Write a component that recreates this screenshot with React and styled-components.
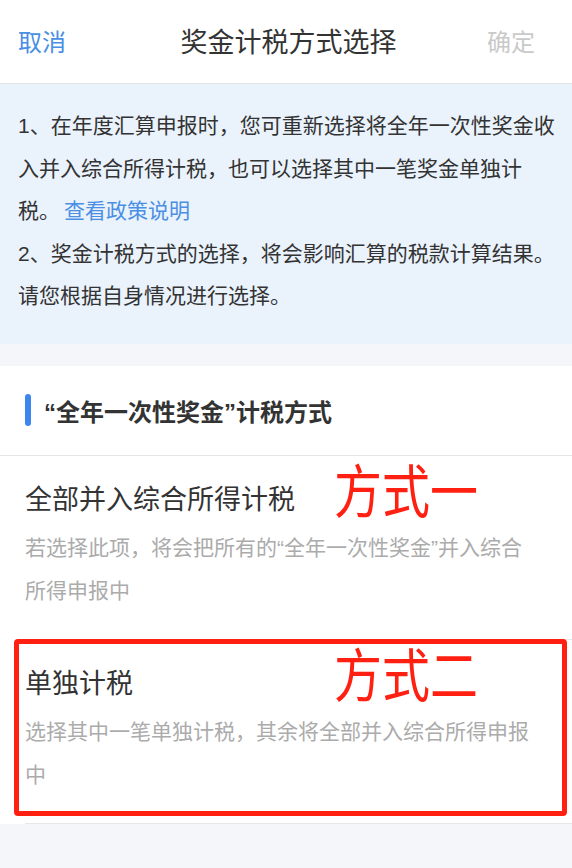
import React from 'react';
import styled, { createGlobalStyle } from 'styled-components';

const GlobalStyle = createGlobalStyle`
  html, body {
    margin: 0;
    padding: 0;
    background: #f5f6fa;
  }
  body {
    font-family: "Liberation Sans", "Noto Sans CJK SC", sans-serif;
    color: #333;
  }
  * {
    box-sizing: border-box;
  }
`;

const options = [
    {
        title: '全部并入综合所得计税',
        desc: '若选择此项，将会把所有的“全年一次性奖金”并入综合所得申报中',
        mark: '方式一',
    },
    {
        title: '单独计税',
        desc: '选择其中一笔单独计税，其余将全部并入综合所得申报中',
        mark: '方式二',
        highlighted: true,
    },
];

function App() {
    return (
        <Page>
            <GlobalStyle />
            <NavBar>
                <NavButton>取消</NavButton>
                <NavTitle>奖金计税方式选择</NavTitle>
                <NavButton $disabled>确定</NavButton>
            </NavBar>

            <Notice>
                <p>
                    1、在年度汇算申报时，您可重新选择将全年一次性奖金收入并入综合所得计税，也可以选择其中一笔奖金单独计税。<Link>查看政策说明</Link>
                </p>
                <p>2、奖金计税方式的选择，将会影响汇算的税款计算结果。请您根据自身情况进行选择。</p>
            </Notice>

            <Section>
                <SectionHeader>“全年一次性奖金”计税方式</SectionHeader>
                {options.map((item) => (
                    <Option key={item.title} $highlighted={item.highlighted}>
                        <OptionTitle>{item.title}</OptionTitle>
                        <OptionDesc>{item.desc}</OptionDesc>
                        <Mark>{item.mark}</Mark>
                    </Option>
                ))}
            </Section>
        </Page>
    );
}

const Page = styled.div`
    width: 572px;
    min-height: 868px;
    background: #f5f6fa;
`;

const NavBar = styled.header`
    height: 84px;
    display: grid;
    grid-template-columns: 1fr auto 1fr;
    align-items: center;
    padding: 0 37px 0 18px;
    background: #fff;
    border-bottom: 1px solid #e3e4e8;
`;

const NavButton = styled.span`
    font-size: 24px;
    color: ${({ $disabled }) => ($disabled ? '#c9c9c9' : '#4a8fe3')};
    justify-self: ${({ $disabled }) => ($disabled ? 'end' : 'start')};
    margin-top: -2px;
`;

const NavTitle = styled.h1`
    margin: -2px 0 0 24px;
    font-size: 27px;
    font-weight: 400;
    color: #333;
`;

const Notice = styled.div`
    background: #eaf2fc;
    padding: 21px 14px 26px 18px;

    p {
        margin: 0;
        font-size: 21px;
        line-height: 42.5px;
        color: #333;
    }
`;

const Link = styled.span`
    color: #4a8fe3;
    padding-left: 4px;
`;

const Section = styled.section`
    margin-top: 22px;
    background: #fff;
`;

const SectionHeader = styled.h2`
    margin: 0;
    height: 90px;
    display: flex;
    align-items: center;
    padding-left: 44px;
    position: relative;
    font-size: 24px;
    font-weight: 700;
    color: #333;
    border-bottom: 1px solid #e6e6e6;

    &::before {
        content: '';
        position: absolute;
        left: 25px;
        top: 28px;
        width: 6px;
        height: 32px;
        border-radius: 3px;
        background: #3d86ee;
    }
`;

const Option = styled.div`
    position: relative;
    margin-left: 25px;
    padding: 23px 39px 27px 0;
    border-bottom: 1px solid #e6e7eb;

    &::after {
        content: '';
        display: ${({ $highlighted }) => ($highlighted ? 'block' : 'none')};
        position: absolute;
        left: -11px;
        right: 5px;
        top: -1px;
        bottom: 7px;
        border: 5px solid #ff2012;
        border-radius: 4px;
        pointer-events: none;
    }
`;

const OptionTitle = styled.div`
    font-size: 27px;
    line-height: 42px;
    color: #333;
`;

const OptionDesc = styled.div`
    margin-top: 5px;
    font-size: 21px;
    line-height: 43px;
    color: #ababab;
`;

const Mark = styled.span`
    position: absolute;
    left: 309px;
    top: 2px;
    font-family: "Noto Sans CJK SC", sans-serif;
    font-size: 48px;
    line-height: 60px;
    color: #ff2012;
    transform: scaleY(1.2);
    transform-origin: center;
    white-space: nowrap;
`;

export default App;
